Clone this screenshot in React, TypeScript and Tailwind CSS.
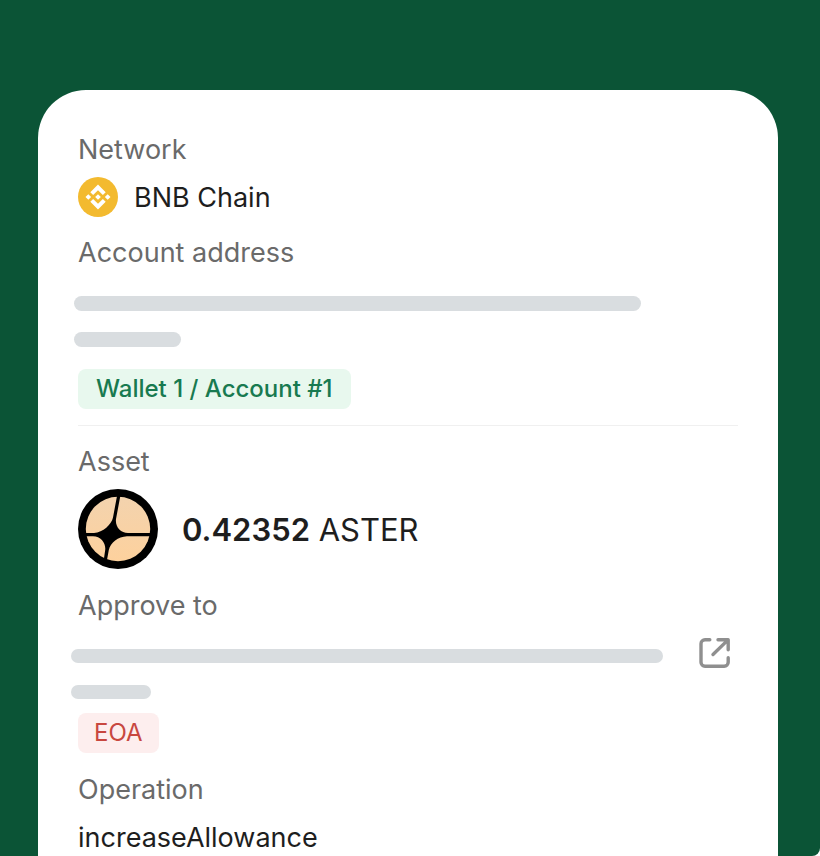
import React from 'react';

function Label({ children }: { children: React.ReactNode }) {
  return <dt className="text-[27px] leading-10 text-[#6a6a6a]">{children}</dt>;
}

function BnbIcon() {
  return (
    <svg viewBox="0 0 32 32" className="size-10 shrink-0" aria-hidden="true">
      <circle cx="16" cy="16" r="16" fill="#f3ba2f" />
      <path
        fill="#fff"
        d="M12.116 14.404 16 10.52l3.886 3.886 2.26-2.26L16 6l-6.144 6.144zM6 16l2.26-2.26L10.52 16l-2.26 2.26zm6.116 1.596L16 21.48l3.886-3.886 2.26 2.259L16 26l-6.144-6.144zM21.48 16l2.26-2.26L26 16l-2.26 2.26zM18.294 16 16 18.294 13.706 16 16 13.706z"
      />
    </svg>
  );
}

function AsterIcon() {
  return (
    <svg viewBox="0 0 80 80" className="size-20 shrink-0" aria-hidden="true">
      <defs>
        <linearGradient id="aster" x1="0" y1="0" x2="0" y2="1">
          <stop offset="0" stopColor="#f3d3ae" />
          <stop offset="1" stopColor="#fdd19d" />
        </linearGradient>
      </defs>
      <circle cx="40" cy="40" r="40" fill="#000" />
      <circle cx="40" cy="40" r="32.2" fill="url(#aster)" />
      <path
        fill="#000"
        d="M39.2 6h3.3L38 30C37 38 42.5 44 50 44H74v3.2H49C40 48 32.6 53 30.8 61L28.8 72h-3.2l1.6-11C28 54 23 47.4 15 47.2H6V44h10C25 43.5 33.5 35.5 35 28.5z"
      />
    </svg>
  );
}

function ExternalIcon() {
  return (
    <svg
      viewBox="0 0 32 32"
      className="size-8"
      fill="none"
      stroke="#8f8f8f"
      strokeWidth="3.4"
      strokeLinecap="round"
      strokeLinejoin="round"
      aria-hidden="true"
    >
      <path d="M10.8 2.7H6a4 4 0 0 0-4 4v18.6a4 4 0 0 0 4 4h19.2a4 4 0 0 0 4-4v-4.5" />
      <path d="M19 2.7h10.2v10M28.5 3.4 14 17.5" />
    </svg>
  );
}

export default function App() {
  return (
    <main className="flex min-h-screen flex-col rounded-br-lg bg-[#0b5436] pt-[90px] pr-[42px] pl-[38px] font-['Inter',sans-serif] text-[#1e1e1e]">
      <section className="flex-1 rounded-t-[48px] bg-white px-10 pt-10">
        <dl>
          <Label>Network</Label>
          <dd className="mt-[7px] flex items-center gap-4 text-[27px] leading-9">
            <BnbIcon />
            <span className="pt-0.5">BNB Chain</span>
          </dd>

          <div className="mt-4">
            <Label>Account address</Label>
            <dd className="mt-[23px]">
              <div className="-ml-1 flex flex-col gap-[21px]">
                <div className="h-[15px] w-[567px] max-w-full rounded-full bg-[#d9dde0]" />
                <div className="h-[15px] w-[107px] rounded-full bg-[#d9dde0]" />
              </div>
              <span className="mt-[22px] flex w-fit rounded-lg bg-[#e8f8ee] px-[18px] text-2xl leading-10 font-medium text-[#187a50]">
                Wallet 1 / Account #1
              </span>
            </dd>
          </div>
        </dl>

        <hr className="mt-4 border-[#f0f0f0]" />

        <dl className="mt-4">
          <Label>Asset</Label>
          <dd className="mt-[7px] flex items-center gap-6 text-[31px] leading-10">
            <AsterIcon />
            <span className="pt-0.5">
              <strong className="font-semibold">0.42352</strong> ASTER
            </span>
          </dd>

          <div className="mt-[17px]">
            <Label>Approve to</Label>
            <dd className="mt-[11px]">
              <div className="-ml-[7px] flex items-start justify-between pr-[7px]">
                <div className="flex flex-1 flex-col gap-[22px] pt-3 pr-9">
                  <div className="h-[14px] w-full rounded-full bg-[#d9dde0]" />
                  <div className="h-[14px] w-20 rounded-full bg-[#d9dde0]" />
                </div>
                <button type="button" aria-label="Open in explorer">
                  <ExternalIcon />
                </button>
              </div>
              <span className="mt-[14px] flex w-fit rounded-lg bg-[#fdeeee] px-4 text-2xl leading-10 text-[#c8473f]">
                EOA
              </span>
            </dd>
          </div>

          <div className="mt-[17px]">
            <Label>Operation</Label>
            <dd className="mt-[10px] text-[27px] leading-9">increaseAllowance</dd>
          </div>
        </dl>
      </section>
    </main>
  );
}
